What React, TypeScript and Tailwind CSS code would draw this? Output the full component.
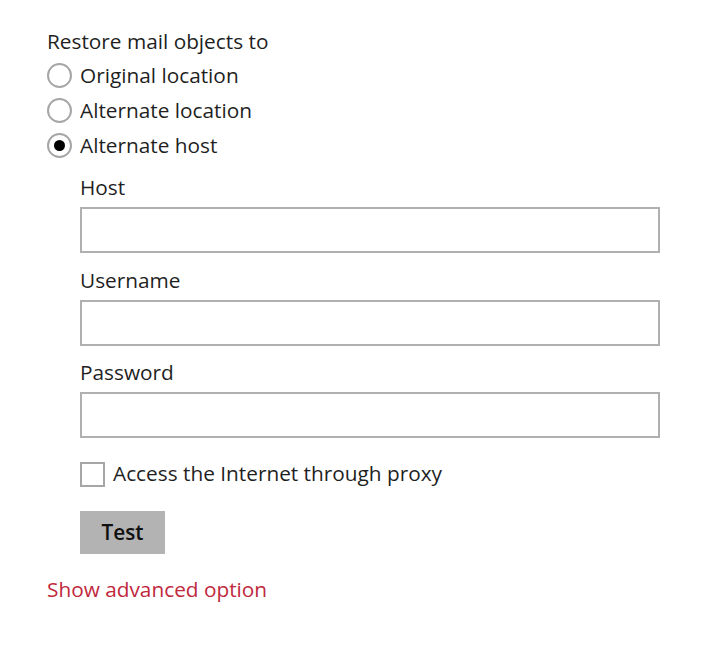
import React from "react";

function Radio({ checked, label }: { checked?: boolean; label: string }) {
  return (
    <div className="flex h-[35px] items-center">
      <span className="flex h-[25px] w-[25px] items-center justify-center rounded-full border-2 border-[#a6a6a6] bg-white">
        {checked && <span className="h-[11px] w-[11px] rounded-full bg-black" />}
      </span>
      <span className="ml-[8px]">{label}</span>
    </div>
  );
}

function Field({ label, mt }: { label: string; mt: string }) {
  return (
    <div className={mt}>
      <div className="flex h-[30px] items-center">{label}</div>
      <div className="mt-[4px] h-[46px] w-[580px] border-2 border-[#b0b0b0] bg-white" />
    </div>
  );
}

export default function App() {
  return (
    <div
      className="min-h-[649px] w-[720px] bg-white pl-[47px] pt-[26px] text-[20.8px] text-[#1f1f1f]"
      style={{ fontFamily: '"Open Sans", "Noto Sans", sans-serif' }}
    >
      <div className="flex h-[32px] items-center">Restore mail objects to</div>
      <Radio label="Original location" />
      <Radio label="Alternate location" />
      <Radio checked label="Alternate host" />
      <div className="ml-[33px]">
        <Field label="Host" mt="mt-[10px]" />
        <Field label="Username" mt="mt-[13px]" />
        <Field label="Password" mt="mt-[12px]" />
        <div className="mt-[21px] flex h-[30px] items-center">
          <span className="h-[25px] w-[25px] border-2 border-[#a6a6a6] bg-white" />
          <span className="ml-[8px]">Access the Internet through proxy</span>
        </div>
        <div className="mt-[22px] flex h-[43px] w-[85px] items-center justify-center bg-[#b3b3b3] font-semibold text-[#111]">
          Test
        </div>
      </div>
      <div className="mt-[21px] flex h-[30px] items-center text-[#c0283c]">Show advanced option</div>
    </div>
  );
}
